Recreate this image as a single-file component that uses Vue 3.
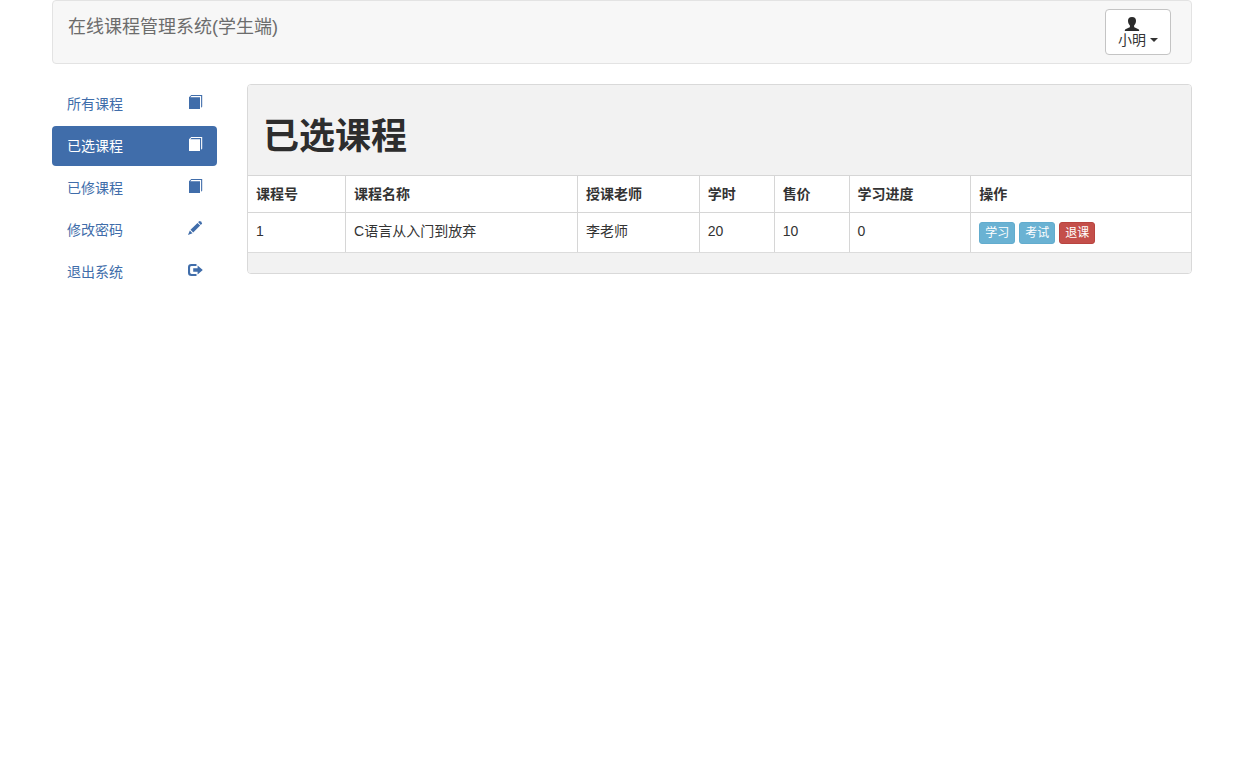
<script setup>
const menu = [
  { label: '所有课程', icon: 'book' },
  { label: '已选课程', icon: 'book', active: true },
  { label: '已修课程', icon: 'book' },
  { label: '修改密码', icon: 'pencil' },
  { label: '退出系统', icon: 'logout' },
]

const columns = [
  { title: '课程号', cls: 'c-id' },
  { title: '课程名称', cls: 'c-name' },
  { title: '授课老师', cls: 'c-teacher' },
  { title: '学时', cls: 'c-hours' },
  { title: '售价', cls: 'c-price' },
  { title: '学习进度', cls: 'c-progress' },
  { title: '操作', cls: 'c-actions' },
]

const courses = [
  { id: 1, name: 'C语言从入门到放弃', teacher: '李老师', hours: 20, price: 10, progress: 0 },
]
</script>

<template>
  <div class="container">
    <header class="navbar">
      <a class="brand" href="#">在线课程管理系统(学生端)</a>
      <button class="user" type="button">
        <svg class="user-icon" viewBox="0 0 14 14" aria-hidden="true">
          <path d="M7 0C9.8 0 11 1.6 11 3.8C11 5.9 10.2 7.6 9.1 8.4V9.4C9.1 10 9.3 10.2 9.9 10.5L13 11.9C13.9 12.3 14.2 12.8 14.2 14H-.2C-.2 12.8 .1 12.3 1 11.9L4.1 10.5C4.7 10.2 4.9 10 4.9 9.4V8.4C3.8 7.6 3 5.9 3 3.8C3 1.6 4.2 0 7 0Z" />
        </svg>
        <span class="user-name">小明 <span class="caret"></span></span>
      </button>
    </header>

    <div class="row">
      <nav class="sidebar">
        <a v-for="item in menu" :key="item.label" class="item" :class="{ active: item.active }" href="#">
          <span>{{ item.label }}</span>
          <svg class="icon" viewBox="0 0 14 14" aria-hidden="true">
            <path
              v-if="item.icon === 'book'"
              d="M3.2 0H14.2V11.8L13.1 12.8V1.1H3.4L2.2 2.3H12V14H1V2.2Z"
            />
            <g v-else-if="item.icon === 'pencil'">
              <path d="M11.3 .2Q11.8 -.2 12.3 .2L13.9 1.8Q14.3 2.3 13.9 2.8L12.8 3.9L10.2 1.3Z" />
              <path d="M9.5 1.9L12.2 4.6L5.2 11.5L2.5 8.8Z" />
              <path d="M1.8 9.5L4.5 12.2L0 14Z" />
            </g>
            <g v-else>
              <path d="M8.5 1H3.4Q0 1 0 4.2V9.8Q0 13 3.4 13H8.5V11H3.7Q2.1 11 2.1 9.6V4.4Q2.1 3 3.7 3H8.5Z" />
              <path d="M9.6 2.6L14.8 7L9.6 11.4V8.7H5.2V5.3H9.6Z" />
            </g>
          </svg>
        </a>
      </nav>

      <main class="panel">
        <div class="panel-heading">
          <h1>已选课程</h1>
        </div>
        <table>
          <thead>
            <tr>
              <th v-for="col in columns" :key="col.title" :class="col.cls" scope="col">{{ col.title }}</th>
            </tr>
          </thead>
          <tbody>
            <tr v-for="course in courses" :key="course.id">
              <td>{{ course.id }}</td>
              <td>{{ course.name }}</td>
              <td>{{ course.teacher }}</td>
              <td>{{ course.hours }}</td>
              <td>{{ course.price }}</td>
              <td>{{ course.progress }}</td>
              <td>
                <div class="actions">
                  <button class="btn info" type="button">学习</button>
                  <button class="btn info" type="button">考试</button>
                  <button class="btn danger" type="button">退课</button>
                </div>
              </td>
            </tr>
          </tbody>
        </table>
        <div class="panel-footer"></div>
      </main>
    </div>
  </div>
</template>

<style>
body {
  background: #fff;
}
</style>

<style scoped>
.container,
.container * {
  box-sizing: border-box;
}

.container {
  max-width: 1170px;
  margin: 0 auto;
  padding: 0 15px;
  font-family: "Liberation Sans", "Noto Sans CJK SC", sans-serif;
  font-size: 14px;
  line-height: 20px;
  color: #333;
}

button {
  font-family: inherit;
  cursor: pointer;
}

a {
  text-decoration: none;
}

.navbar {
  display: flex;
  justify-content: space-between;
  align-items: flex-start;
  margin-bottom: 20px;
  padding: 8px 20px 8px 15px;
  border: 1px solid #e3e3e3;
  border-radius: 4px;
  background: #f7f7f7;
}

.brand {
  padding-top: 8px;
  font-size: 18px;
  color: #6c6c6c;
}

.user {
  display: flex;
  flex-direction: column;
  padding: 7px 12px 5px;
  border: 1px solid #c4c4c4;
  border-radius: 4px;
  background: #fff;
  color: #333;
  font-size: 14px;
  line-height: 18px;
}

.user-icon {
  width: 14px;
  height: 14px;
  margin-left: 7px;
  fill: #2b2b2b;
  overflow: visible;
}

.user-name {
  display: flex;
  align-items: center;
  gap: 4px;
}

.caret {
  border-top: 4px solid #333;
  border-left: 4px solid transparent;
  border-right: 4px solid transparent;
}

.row {
  display: flex;
  align-items: flex-start;
  gap: 30px;
}

.sidebar {
  display: flex;
  flex: 0 0 165px;
  flex-direction: column;
  gap: 2px;
}

.item {
  display: flex;
  justify-content: space-between;
  align-items: flex-start;
  padding: 10px 15px;
  border-radius: 4px;
  color: #406daa;
}

.item.active {
  background: #406daa;
  color: #fff;
}

.icon {
  width: 14px;
  height: 14px;
  margin-top: 1px;
  fill: currentColor;
  overflow: visible;
}

.panel {
  flex: 1;
  min-width: 0;
  border: 1px solid #d9d9d9;
  border-radius: 4px;
  background: #fff;
  overflow: hidden;
}

.panel-heading {
  padding: 32px 15px 18px;
  background: #f2f2f2;
}

h1 {
  margin: 0;
  font-size: 36px;
  line-height: 40px;
  font-weight: 700;
  color: #2d2d2d;
}

table {
  width: 100%;
  table-layout: fixed;
  border-collapse: separate;
  border-spacing: 0;
}

th,
td {
  padding: 8px;
  border-top: 1px solid #d6d6d6;
  border-right: 1px solid #d6d6d6;
  text-align: left;
  vertical-align: top;
}

th:last-child,
td:last-child {
  border-right: 0;
}

.c-id {
  width: 10.4%;
}

.c-name {
  width: 24.6%;
}

.c-teacher,
.c-progress {
  width: 12.9%;
}

.c-hours,
.c-price {
  width: 7.95%;
}

.actions {
  display: flex;
  gap: 4px;
  padding-top: 1px;
}

.btn {
  padding: 1px 5px;
  border: 1px solid;
  border-radius: 3px;
  color: #fff;
  font-size: 12px;
  line-height: 18px;
}

.info {
  border-color: #62acce;
  background: #6ab2d3;
}

.danger {
  border-color: #b8443f;
  background: #c44f4a;
}

.panel-footer {
  height: 21px;
  border-top: 1px solid #dcdcdc;
  background: #f2f2f2;
}
</style>
